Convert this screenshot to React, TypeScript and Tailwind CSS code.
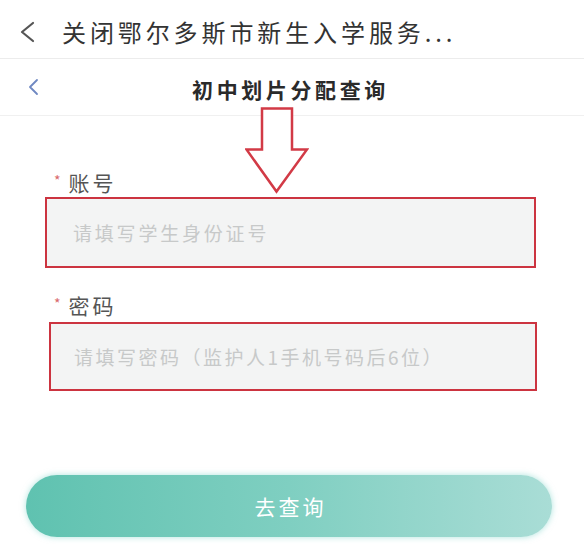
import React from "react";

export default function App() {
  return (
    <div
      className="w-[584px] h-[544px] bg-white overflow-hidden flex flex-col relative"
      style={{ fontFamily: '"Noto Sans CJK SC", "Noto Sans", sans-serif' }}
    >
      {/* top bar */}
      <div className="h-[59px] flex items-center pt-[6px] border-b border-[#ececec] shrink-0">
        <svg className="ml-[18px]" width="18" height="22" viewBox="0 0 18 22" fill="none">
          <path d="M15 2 L4 11 L15 20" stroke="#555" strokeWidth="2.2" strokeLinecap="round" strokeLinejoin="round" />
        </svg>
        <span className="ml-[26px] text-[24px] leading-none tracking-[3.9px] text-[#333] whitespace-nowrap">
          关闭鄂尔多斯市新生入学服务...
        </span>
      </div>

      {/* second header */}
      <div className="h-[57px] flex items-center relative border-b border-[#f0f0f0] shrink-0">
        <svg className="ml-[27px]" width="12" height="18" viewBox="0 0 12 18" fill="none">
          <path d="M10 2 L3 9 L10 16" stroke="#6f88c2" strokeWidth="1.8" strokeLinecap="round" strokeLinejoin="round" />
        </svg>
        <div className="flex-1 flex justify-center pr-[42px] pt-[4px]">
          <span className="text-[21px] leading-none font-bold tracking-[3.6px] text-[#2a2a2a] whitespace-nowrap">
            初中划片分配查询
          </span>
        </div>
      </div>

      {/* annotation arrow */}
      <svg className="absolute left-[245px] top-[107px]" width="64" height="88" viewBox="0 0 64 88" fill="none">
        <path
          d="M17 1.5 L47 1.5 L47 42.5 L62 42.5 L31.5 84.5 L1.5 42.5 L17 42.5 Z"
          fill="white"
          stroke="#d23a46"
          strokeWidth="2.5"
          strokeLinejoin="miter"
        />
      </svg>

      {/* account label */}
      <div className="mt-[54px] h-[24px] flex items-center ml-[54px]">
        <span className="text-[14px] text-[#d9686c] leading-none -mt-[4px]">*</span>
        <span className="ml-[8px] text-[21px] leading-none tracking-[3px] text-[#555]">账号</span>
      </div>
      <div className="mt-[3px] ml-[45px] w-[491px] h-[71px] border-[2.5px] border-[#cc3440] bg-[#f3f4f4] flex items-center pl-[26px]">
        <span className="text-[19px] leading-none tracking-[2.8px] text-[#c7c9c9] whitespace-nowrap">
          请填写学生身份证号
        </span>
      </div>

      {/* password label */}
      <div className="mt-[25px] h-[24px] flex items-center ml-[54px]">
        <span className="text-[14px] text-[#d9686c] leading-none -mt-[4px]">*</span>
        <span className="ml-[8px] text-[21px] leading-none tracking-[3px] text-[#555]">密码</span>
      </div>
      <div className="mt-[5px] ml-[49px] w-[488px] h-[69px] border-[2.5px] border-[#cc3440] bg-[#f3f4f4] flex items-center pl-[23px]">
        <span className="text-[19px] leading-none tracking-[2.5px] text-[#c7c9c9] whitespace-nowrap">
          请填写密码（监护人1手机号码后6位）
        </span>
      </div>

      {/* button */}
      <div className="mt-[84px] ml-[26px] w-[526px] h-[62px] rounded-full bg-gradient-to-r from-[#5fc2b0] via-[#7fcfc1] to-[#a9ddd6] shadow-[0_0_6px_rgba(120,210,200,0.6)] flex items-center justify-center">
        <span className="text-[21px] leading-none tracking-[3px] text-white pl-[3px]">去查询</span>
      </div>
    </div>
  );
}
